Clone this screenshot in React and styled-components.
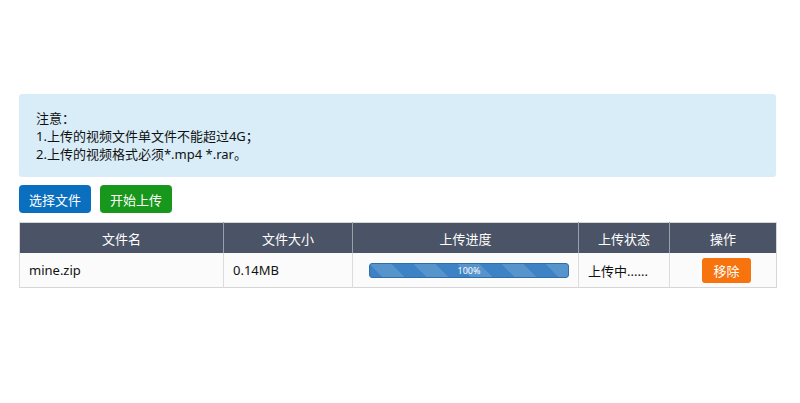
import React from 'react';
import styled, { createGlobalStyle } from 'styled-components';

// 上传页面

const GlobalStyle = createGlobalStyle`
  body {
    margin: 0;
    background: #fff;
    font-family: "Noto Sans", "Noto Sans CJK SC", sans-serif;
    font-size: 13px;
    color: #111;
  }
`;

const files = [{ name: 'mine.zip', size: '0.14MB', progress: 100, status: '上传中......' }];

const App = () => {
  return (
    <React.Fragment>
      <GlobalStyle />
      <Wrap>
        {/* 注意事项 */}
        <Notice>
          <div>注意：</div>
          <div>1.上传的视频文件单文件不能超过4G；</div>
          <div>2.上传的视频格式必须*.mp4 *.rar。</div>
        </Notice>

        <Toolbar>
          <Button color="#0b6fc0">选择文件</Button>
          <Button color="#17971b">开始上传</Button>
        </Toolbar>

        <Table>
          <colgroup>
            <col width="204" />
            <col width="129" />
            <col width="226" />
            <col width="91" />
            <col width="107" />
          </colgroup>
          <thead>
            <tr>
              <Th>文件名</Th>
              <Th>文件大小</Th>
              <Th>上传进度</Th>
              <Th>上传状态</Th>
              <Th>操作</Th>
            </tr>
          </thead>
          <tbody>
            {files.map((f) => (
              <tr key={f.name}>
                <Td>{f.name}</Td>
                <Td>{f.size}</Td>
                <Td center>
                  <Progress>
                    <Bar style={{ width: f.progress + '%' }}>{f.progress}%</Bar>
                  </Progress>
                </Td>
                <Td>{f.status}</Td>
                <Td center>
                  <RemoveButton>移除</RemoveButton>
                </Td>
              </tr>
            ))}
          </tbody>
        </Table>
      </Wrap>
    </React.Fragment>
  );
};

const Wrap = styled.div`
  width: 757px;
  padding: 94px 0 0 19px;
`;

const Notice = styled.div`
  background: #d9edf8;
  border-radius: 3px;
  padding: 15px 17px 15px 17px;
  height: 53px;
  line-height: 18px;
  color: #111;
`;

const Toolbar = styled.div`
  display: flex;
  gap: 9px;
  margin-top: 8px;
`;

const Button = styled.button`
  width: 72px;
  height: 28px;
  border: none;
  border-radius: 4px;
  background: ${(p) => p.color};
  color: #fff;
  font-family: inherit;
  font-size: 13px;
  padding: 0;
  cursor: pointer;
`;

const Table = styled.table`
  width: 757px;
  margin-top: 9px;
  border-collapse: collapse;
  table-layout: fixed;
  border: 1px solid #d6d6d6;
`;

const Th = styled.th`
  height: 30px;
  padding: 0;
  background: #4b5466;
  color: #fff;
  font-weight: normal;
  border-left: 1px solid #9aa0aa;
  &:first-child {
    border-left: none;
  }
`;

const Td = styled.td`
  height: 34px;
  padding: 0 0 0 9px;
  ${(p) => (p.center ? 'padding: 0 0 0 7px; text-align: center;' : '')}
  background: #fbfbfb;
  border-left: 1px solid #dcdcdc;
  color: #111;
`;

const Progress = styled.div`
  width: 200px;
  height: 15px;
  margin: 0 auto;
  border-radius: 3px;
  background: #e8e8e8;
  overflow: hidden;
`;

const Bar = styled.div`
  height: 100%;
  box-sizing: border-box;
  border: 1px solid #2f6eab;
  border-radius: 3px;
  background-color: #3d82c4;
  background-image: linear-gradient(
    45deg,
    rgba(255, 255, 255, 0.14) 25%,
    transparent 25%,
    transparent 50%,
    rgba(255, 255, 255, 0.14) 50%,
    rgba(255, 255, 255, 0.14) 75%,
    transparent 75%,
    transparent
  );
  background-size: 44px 44px;
  color: #fff;
  font-size: 9px;
  line-height: 13px;
  text-align: center;
`;

const RemoveButton = styled.button`
  width: 49px;
  height: 25px;
  border: none;
  border-radius: 3px;
  background: #f7730e;
  color: #fff;
  font-family: inherit;
  font-size: 13px;
  padding: 0;
`;

export default App;
